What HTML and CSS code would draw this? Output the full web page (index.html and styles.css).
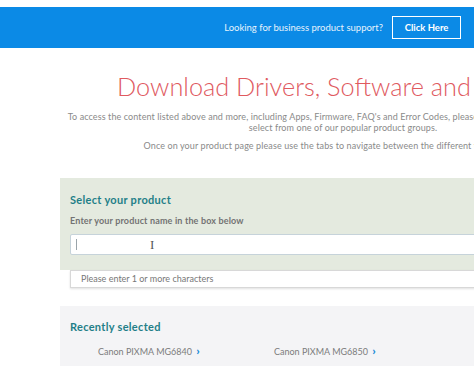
FILE: index.html
```html
<!DOCTYPE html>
<html lang="en">
<head>
  <meta charset="UTF-8">
  <meta name="viewport" content="width=device-width, initial-scale=1.0">
  <title>Support - Download Drivers</title>
  <link rel="stylesheet" href="styles.css">
</head>
<body>

  <div class="topbar">
    <span class="topbar-text">Looking for business product support?</span>
    <a class="topbar-button" href="#">Click Here</a>
  </div>

  <div class="page">
    <h1>Download Drivers, Software and Manuals</h1>
    <p class="intro">To access the content listed above and more, including Apps, Firmware, FAQ's and Error Codes, please enter your product name below or select from one of our popular product groups.</p>
    <p class="intro">Once on your product page please use the tabs to navigate between the different types of support.</p>

    <div class="select-panel">
      <h2>Select your product</h2>
      <label for="product">Enter your product name in the box below</label>
      <div class="search-wrap">
        <input type="text" id="product" class="search-input">
        <span class="caret"></span>
        <span class="ibeam">I</span>
      </div>
    </div>
    <div class="suggest">Please enter 1 or more characters</div>

    <div class="recent">
      <h2>Recently selected</h2>
      <div class="recent-list">
        <a href="#" class="recent-item">Canon PIXMA MG6840 <span class="chev">&#8250;</span></a>
        <a href="#" class="recent-item">Canon PIXMA MG6850 <span class="chev">&#8250;</span></a>
      </div>
    </div>
  </div>

</body>
</html>
```

FILE: styles.css
```css
* {
  margin: 0;
  padding: 0;
  box-sizing: border-box;
}

body {
  font-family: Lato, 'Open Sans', sans-serif;
  background: #fff;
  color: #7a7a7a;
  overflow: hidden;
  width: 474px;
  height: 366px;
}

.topbar {
  margin-top: 7px;
  height: 41px;
  background: #0b8ae6;
  display: flex;
  justify-content: flex-end;
  align-items: center;
  gap: 9px;
  padding-right: 13px;
}

.topbar-text {
  color: #e6f2fc;
  font-size: 9.5px;
}

.topbar-button {
  display: flex;
  align-items: center;
  justify-content: center;
  width: 69px;
  height: 23px;
  border: 1.5px solid #fff;
  color: #fff;
  font-size: 9.5px;
  font-weight: bold;
  text-decoration: none;
}

.page {
  width: 566px;
  margin-left: 60px;
  text-align: center;
}

.page h1 {
  margin-top: 23px;
  font-size: 25.3px;
  font-weight: 300;
  color: #e05a5f;
  line-height: 30px;
}

.intro {
  max-width: 556px;
  margin: 10px auto 0;
  font-size: 9px;
  line-height: 11px;
  letter-spacing: 0.1px;
  color: #8a8a8a;
}

.intro + .intro {
  margin-top: 7px;
}

.select-panel {
  margin-top: 27px;
  background: #e4eadf;
  padding: 15px 10px 15px;
  text-align: left;
}

.select-panel h2,
.recent h2 {
  font-size: 11px;
  font-weight: bold;
  color: #1f7f88;
  letter-spacing: 0.3px;
}

.select-panel label {
  display: block;
  margin-top: 9px;
  font-size: 9px;
  font-weight: bold;
  letter-spacing: 0.15px;
  color: #737373;
}

.search-wrap {
  position: relative;
  margin-top: 8px;
}

.search-input {
  display: block;
  width: 100%;
  height: 21px;
  border: 1px solid #c6d3da;
  border-radius: 2px;
  background: #fff;
}

.caret {
  position: absolute;
  left: 6px;
  top: 5px;
  width: 1px;
  height: 11px;
  background: #9aa4aa;
}

.ibeam {
  position: absolute;
  left: 80px;
  top: 3px;
  font-family: 'Liberation Serif', serif;
  font-size: 13px;
  color: #555;
}

.suggest {
  margin-left: 10px;
  height: 18px;
  border: 1px solid #d8d8d8;
  background: #fff;
  box-shadow: 0 1px 2px rgba(0, 0, 0, 0.12);
  font-size: 9px;
  color: #777;
  text-align: left;
  padding-left: 10px;
  line-height: 16px;
}

.recent {
  margin-top: 18px;
  background: #f4f4f6;
  padding: 14px 10px 10px;
  text-align: left;
  height: 80px;
}

.recent-list {
  display: flex;
  margin-top: 10px;
  padding-left: 28px;
}

.recent-item {
  width: 176px;
  font-size: 9px;
  color: #7c7c7c;
  text-decoration: none;
}

.chev {
  color: #1a8ad6;
  font-weight: 900;
  font-size: 12px;
  margin-left: 2px;
}
```
